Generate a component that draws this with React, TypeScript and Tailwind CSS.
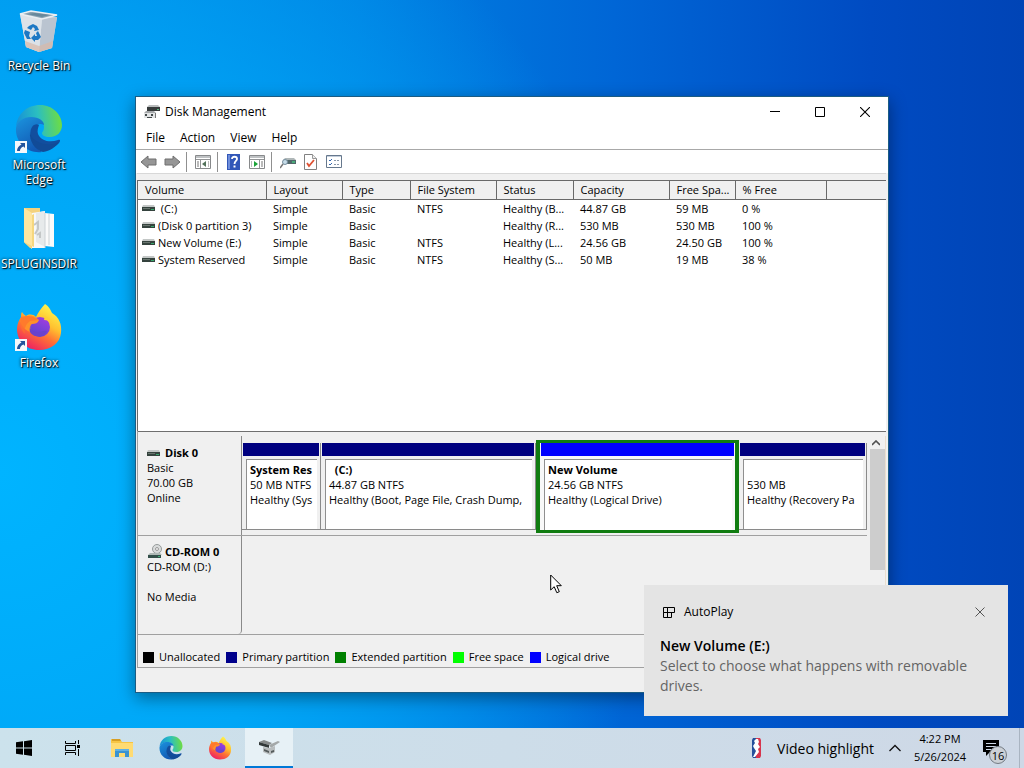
import { useState } from "react";
import type { ReactNode } from "react";

type Volume = {
  name: string;
  layout: string;
  type: string;
  fs: string;
  status: string;
  capacity: string;
  free: string;
  percent: string;
};

const volumes: Volume[] = [
  { name: " (C:)", layout: "Simple", type: "Basic", fs: "NTFS", status: "Healthy (B...", capacity: "44.87 GB", free: "59 MB", percent: "0 %" },
  { name: "(Disk 0 partition 3)", layout: "Simple", type: "Basic", fs: "", status: "Healthy (R...", capacity: "530 MB", free: "530 MB", percent: "100 %" },
  { name: "New Volume (E:)", layout: "Simple", type: "Basic", fs: "NTFS", status: "Healthy (L...", capacity: "24.56 GB", free: "24.50 GB", percent: "100 %" },
  { name: "System Reserved", layout: "Simple", type: "Basic", fs: "NTFS", status: "Healthy (S...", capacity: "50 MB", free: "19 MB", percent: "38 %" },
];

const columns = ["Volume", "Layout", "Type", "File System", "Status", "Capacity", "Free Spa...", "% Free", ""];

const legend = [
  { label: "Unallocated", color: "bg-black" },
  { label: "Primary partition", color: "bg-[#00008b]" },
  { label: "Extended partition", color: "bg-[#008000]" },
  { label: "Free space", color: "bg-[#00ff00]" },
  { label: "Logical drive", color: "bg-[#0000ff]" },
];

function RecycleBinIcon() {
  return (
    <svg width="48" height="48" viewBox="0 -2 48 48">
      <path d="M5 6 42 9 37 40 24 44 11 39Z" fill="#d5dbe2" />
      <path d="M27 11 42 9 37 40 24 44Z" fill="#bac4d0" />
      <path d="M5 6 27 11 24 44 11 39Z" fill="#dce2e8" />
      <path d="M5 6 16 3 42 7 27 11Z" fill="#8ba3b3" stroke="#e9eef2" strokeWidth="1.5" />
      <path d="M12 6 20 5 35 7 27 9Z" fill="#67889b" />
      <path d="M10 33 24 38 38 33 37 40 24 44 11 39Z" fill="#d8b9a8" opacity=".7" />
      <g fill="#1d78c4">
        <path d="m14 18 4-2 4 2 2 4-5 1 1-2-2-2-2 3-4-2Z" />
        <path d="m10 22 5 2-1 4 2 3h-4l-3-6Z" />
        <path d="m23 23 3 6-3 3h-3v2l-4-4 4-4v2h2l-1-3Z" />
      </g>
    </svg>
  );
}

function EdgeIcon({ size, id }: { size: number; id: string }) {
  return (
    <svg width={size} height={size} viewBox="0 0 48 48">
      <defs>
        <linearGradient id={`${id}-top`} x1="0" y1=".6" x2="1" y2=".5">
          <stop offset="0" stopColor="#168fd8" />
          <stop offset=".5" stopColor="#2bbfc0" />
          <stop offset="1" stopColor="#70dd3f" />
        </linearGradient>
        <linearGradient id={`${id}-mid`} x1="0" y1="0" x2=".5" y2="1">
          <stop offset="0" stopColor="#1b94de" />
          <stop offset="1" stopColor="#1259b4" />
        </linearGradient>
      </defs>
      <path d="M1 22C2 9 12 0 25 0c13 0 22 10 22 20 0 7-5 12-12 12-6 0-8-2-8-4 0-1 2-2 2-6 0-5-5-9-12-9-9 0-15 4-16 9Z" fill={`url(#${id}-top)`} />
      <path d="M1 23c1-7 8-11 15-11 8 0 13 4 13 8-3-2-8-1-11 3-4 5-2 18 9 24C13 49 0 38 1 23Z" fill={`url(#${id}-mid)`} />
      <path d="M19 20c-6 4-5 18 8 23 7 2 13-1 17-5 2-3 1-4-1-3-8 3-17 1-20-6-1-3 0-6 1-9-1-1-3-1-5 0Z" fill="#124e9e" />
      <path d="M15 27c-1 9 5 18 13 20 7-1 13-5 16-10-4 2-9 3-14 2-7-1-14-5-15-12Z" fill="#114b97" />
    </svg>
  );
}

function FirefoxIcon({ size, id }: { size: number; id: string }) {
  return (
    <svg width={size} height={size} viewBox="0 0 48 48">
      <defs>
        <linearGradient id={`${id}-fire`} x1=".8" y1=".1" x2=".3" y2="1">
          <stop offset="0" stopColor="#fff04a" />
          <stop offset=".35" stopColor="#ffc02f" />
          <stop offset=".6" stopColor="#ff7334" />
          <stop offset="1" stopColor="#ed1e65" />
        </linearGradient>
        <linearGradient id={`${id}-globe`} x1=".7" y1="0" x2=".2" y2="1">
          <stop offset="0" stopColor="#a23ce0" />
          <stop offset="1" stopColor="#5247d0" />
        </linearGradient>
      </defs>
      <path d="M30 1c4 2 6 7 7 9 7 4 10 11 9 20-1 10-10 17-22 17C11 47 2 38 2 26c0-5 2-9 4-12 0-2 0-4 1-5 1 2 3 3 4 4 3-2 7-2 10 1 2-4 5-9 9-13Z" fill={`url(#${id}-fire)`} />
      <circle cx="25" cy="24" r="10" fill={`url(#${id}-globe)`} />
      <path d="M5 18c3-5 9-7 14-5l5 4c-1 3-4 4-7 4-3 2-2 5 1 8-7 0-11-5-13-11Z" fill="#ff9229" />
      <path d="M15 24c1 4 4 5 8 5 4 0 5-2 9-1-2 5-9 7-14 4-3-2-4-4-3-8Z" fill="#6a42cc" />
      <path d="M27 12c5 1 9 4 11 9-3-3-6-4-9-4 1-2 0-3-2-5Z" fill="#ffcf35" />
      <path d="M6 14c-2 8 0 13 4 17-1-6 1-10 5-13l8-1c-4-4-11-5-17-3Z" fill="#ff702d" opacity=".7" />
    </svg>
  );
}

function FolderIcon() {
  return (
    <svg width="48" height="48" viewBox="0 0 48 48">
      <path d="M9 4h16v37L15 44 9 38Z" fill="#f4d27d" />
      <path d="m9 4 8 5v36l-8-7Z" fill="#ffe6a0" />
      <path d="m17 9 13-2v37H17Z" fill="#f7f8f9" />
      <path d="m21 9 9-2v36l-9-5Z" fill="#e7eaeb" />
      <path d="m30 9 9 1v33l-9-1Z" fill="#fafafa" />
      <path d="M30 9v35M34 10v31" stroke="#ccd2d5" />
      <path d="m19 21 4-3v7l-3 5m2 1 3-2v5" stroke="#c4c7c7" fill="none" strokeWidth="2" />
      <path d="m9 38 8 7V11l2-1v33Z" fill="#f6d77f" />
    </svg>
  );
}

function DriveIcon() {
  return (
    <svg className="shrink-0" width="14" height="14" viewBox="0 0 14 14">
      <path d="M1 4h11l1 2H0Z" fill="#c3c7c6" />
      <path d="M0 6h13v4H0Z" fill="#35433e" />
      <path d="M1 7h7v1H1Z" fill="#69756f" />
      <path d="M9 8h3v1H9Z" fill="#37a86c" />
    </svg>
  );
}

function DisksIcon({ size }: { size: number }) {
  return (
    <svg width={size} height={size} viewBox="0 0 16 16">
      <path d="M5 1h9l2 2H3Z" fill="#b9bcbd" />
      <path d="M3 3h13v4H3Z" fill="#363b3b" />
      <path d="M13 5h2v1h-2Z" fill="#54b57d" />
      <path d="M2 7h8l2 2H0Z" fill="#a5a8aa" />
      <path d="M0 9h12v5H0Z" fill="#e2e4e5" />
      <path d="M1 10h2v2H1Zm6 0h2v2H7Zm-4 3h5v1H3Z" fill="#414849" />
      <path d="M11.500 9v5" stroke="#777" />
    </svg>
  );
}

function CdRomIcon() {
  return (
    <svg className="shrink-0" width="16" height="16" viewBox="0 0 16 16">
      <circle cx="10" cy="5" r="4.500" fill="#dadcdc" stroke="#969b9b" />
      <circle cx="10" cy="5" r="1.500" fill="#f5f5f5" stroke="#999" />
      <path d="M3 9h10l2 2H1Z" fill="#afb9b6" />
      <path d="M1 11h13v3H1Z" fill="#34504a" />
      <path d="M11 12h2v1h-2Z" fill="#42b17a" />
    </svg>
  );
}

function ArrowIcon({ back = false }: { back?: boolean }) {
  return (
    <svg width="18" height="16" viewBox="0 0 18 16">
      <path
        d={back ? "m1 8 7-6v3h8v6H8v3Z" : "m17 8-7-6v3H2v6h8v3Z"}
        fill="#969696"
        stroke="#6f6f6f"
      />
    </svg>
  );
}

function PaneIcon({ play = false }: { play?: boolean }) {
  return (
    <svg width="16" height="14" viewBox="0 0 16 14">
      <path d="M.5.5h15v13H.5Z" fill="#fff" stroke="#87898b" />
      <path d="M1 1h14v2H1Z" fill="#bfc2c4" />
      <path d="M1 4.500h14" stroke="#929496" />
      <path d={play ? "M10.500 5v8" : "M5.500 5v8"} stroke="#929496" />
      <path
        d={play ? "M12 7h2M12 9h2M12 11h2M2 7h1M2 9h1M2 11h1" : "M2 7h2M2 9h2M2 11h2M13 7h1M13 9h1M13 11h1"}
        stroke="#777"
      />
      <path d={play ? "m5 6 4 3-4 3Z" : "m11 6-4 3 4 3Z"} fill={play ? "#1aa338" : "#52725a"} />
    </svg>
  );
}

function HelpIcon() {
  return (
    <svg width="13" height="16" viewBox="0 0 13 16">
      <path d="M0 0h13v16H0Z" fill="#3257b8" />
      <path d="M1 1h2v14H1Z" fill="#6f8edb" />
      <path d="M5 5c0-3 5-3 5 0 0 2-2.500 2-2.500 5" fill="none" stroke="#fff" strokeWidth="1.800" />
      <path d="M6.500 11.500h2v2h-2Z" fill="#fff" />
    </svg>
  );
}

function RescanIcon() {
  return (
    <svg width="16" height="14" viewBox="0 0 16 14">
      <path d="M5 3h9l2 2H3Z" fill="#afb7b8" />
      <path d="M3 5h13v4H3Z" fill="#52676a" />
      <path d="M12 6h3v2h-3Z" fill="#48aa79" />
      <circle cx="5" cy="7" r="2.500" fill="#c6dce8" stroke="#7890a0" />
      <path d="m3 9-3 4" stroke="#777" strokeWidth="1.500" />
    </svg>
  );
}

function CheckPageIcon() {
  return (
    <svg width="13" height="16" viewBox="0 0 13 16">
      <path d="M.5.5h8l4 4v11H.5Z" fill="#fff" stroke="#818181" />
      <path d="M8.500.5v4h4" fill="#eee" stroke="#999" />
      <path d="m3 9 2 3 5-6" fill="none" stroke="#df5132" strokeWidth="1.800" />
    </svg>
  );
}

function PropertiesIcon() {
  return (
    <svg width="16" height="13" viewBox="0 0 16 13">
      <path d="M.5.5h15v12H.5Z" fill="#fff" stroke="#66788d" />
      <path d="M1 1h14v1H1Z" fill="#c4cedb" />
      <path d="m3 5 1 1 2-2m-3 5 1 1 2-2" fill="none" stroke="#3769af" />
      <path d="M8 5.500h2m1 0h2M8 9.500h2m1 0h2" stroke="#8998aa" />
    </svg>
  );
}

function ExplorerIcon() {
  return (
    <svg width="22" height="20" viewBox="0 0 22 20">
      <path d="M0 1h9l2 3h11v15H0Z" fill="#f7c544" />
      <path d="M1 1h8l1 2H1Z" fill="#d69e25" />
      <path d="M0 5h22v14H0Z" fill="#ffdb72" />
      <path d="M4 19v-8h14v8h-4v-4H8v4Z" fill="#3a93d1" />
      <path d="M4 11h14v2H4Z" fill="#60b0e3" />
    </svg>
  );
}

function DesktopIcon({ label, shortcut, children }: { label: string; shortcut?: boolean; children: ReactNode }) {
  return (
    <button className="flex h-[99px] w-[78px] flex-col items-center">
      <span className="relative">
        {children}
        {shortcut && (
          <svg className="absolute bottom-0 left-0" width="12" height="12" viewBox="0 0 12 12">
            <path d="M0 0h12v12H0Z" fill="#f5f8fb" />
            <path d="M5 2h5v5L8.500 5.500C6 6.500 5 8 5 10H2c0-3 1.500-5 4.500-6.500Z" fill="#22539c" />
          </svg>
        )}
      </span>
      <span className="mt-1 text-center text-[12px] leading-[15px] text-white [text-shadow:1px_1px_1px_#000,0_0_3px_#000]">
        {label}
      </span>
    </button>
  );
}

function ToolButton({ label, children }: { label: string; children: ReactNode }) {
  return (
    <button aria-label={label} className="flex h-5 w-[23px] items-center justify-center hover:bg-[#d8eaf9]">
      {children}
    </button>
  );
}

function Separator() {
  return <span className="mr-1 ml-[3px] h-5 w-px bg-[#909090]" />;
}

function VolumeTable() {
  return (
    <table className="w-full table-fixed border-collapse text-left text-[11px]">
      <colgroup>
        <col className="w-[128px]" />
        <col className="w-[76px]" />
        <col className="w-[68px]" />
        <col className="w-[86px]" />
        <col className="w-[77px]" />
        <col className="w-[96px]" />
        <col className="w-[66px]" />
        <col className="w-[91px]" />
        <col />
      </colgroup>
      <thead>
        <tr className="h-[18px] bg-[#f0f0f0]">
          {columns.map((column, i) => (
            <th
              key={i}
              className="overflow-hidden border-r border-b border-[#696969] pl-[7px] leading-[17px] font-normal whitespace-nowrap last:border-r-0"
            >
              {column}
            </th>
          ))}
        </tr>
      </thead>
      <tbody>
        {volumes.map((v) => (
          <tr key={v.name} className="h-[17px] whitespace-nowrap *:overflow-hidden *:pl-[7px] *:leading-[17px]">
            <td>
              <span className="-ml-[3px] flex items-center gap-0.5 whitespace-pre">
                <DriveIcon />
                {v.name}
              </span>
            </td>
            <td>{v.layout}</td>
            <td>{v.type}</td>
            <td>{v.fs}</td>
            <td>{v.status}</td>
            <td>{v.capacity}</td>
            <td>{v.free}</td>
            <td>{v.percent}</td>
            <td />
          </tr>
        ))}
      </tbody>
    </table>
  );
}

function Partition({ name, size, status, logical }: { name: string; size: string; status: string; logical?: boolean }) {
  return (
    <div
      className={
        logical
          ? "flex min-w-0 flex-col border-x-4 border-y-3 border-[#107c10] bg-[#f8f8f8] px-px"
          : "my-[3px] flex min-w-0 flex-col border-r border-b border-[#8a8a8a] px-px"
      }
    >
      <div className={logical ? "h-[13px] bg-[#0000ff]" : "h-[13px] bg-[#00007f]"} />
      <div className="mr-0.5 ml-[3px] mt-[3px] flex-1 overflow-hidden border-t border-l border-[#8f8f8f] bg-white px-[3px] pt-0.5 leading-[15px] whitespace-pre">
        <div className="h-[15px] font-bold">{name}</div>
        <div>{size}</div>
        <div>{status}</div>
      </div>
    </div>
  );
}

function DiskMap() {
  return (
    <div className="flex border-t border-[#6f6f6f] bg-[#f0f0f0] pt-1 text-[11px]">
      <div className="min-w-0 flex-1">
        <div className="flex h-[100px] border-b border-[#a0a0a0]">
          <div className="w-[104px] shrink-0 border-r border-[#8a8a8a] px-[9px] pt-[9px] leading-[15px]">
            <div className="flex items-center gap-1 font-bold"><DriveIcon />Disk 0</div>
            <div>Basic</div>
            <div>70.00 GB</div>
            <div>Online</div>
          </div>
          <div className="grid min-w-0 flex-1 grid-cols-[79fr_215fr_203fr_128fr] pt-1 pb-0.5">
            <Partition name="System Res" size="50 MB NTFS" status="Healthy (Sys" />
            <Partition name="  (C:)" size="44.87 GB NTFS" status="Healthy (Boot, Page File, Crash Dump," />
            <Partition name="New Volume" size="24.56 GB NTFS" status="Healthy (Logical Drive)" logical />
            <Partition name="" size="530 MB" status="Healthy (Recovery Pa" />
          </div>
        </div>
        <div className="flex h-[99px] border-b border-[#a0a0a0]">
          <div className="w-[104px] shrink-0 rounded-br border-r border-[#8a8a8a] px-[9px] pt-2 leading-[15px]">
            <div className="flex h-[15px] items-center gap-0.5 font-bold whitespace-nowrap"><CdRomIcon />CD-ROM 0</div>
            <div>CD-ROM (D:)</div>
            <div className="mt-[15px]">No Media</div>
          </div>
          <div className="flex-1" />
        </div>
      </div>
      <div className="flex w-[19px] flex-col border-r border-[#eadfce] bg-[#f0f0f0]">
        <button aria-label="Scroll up" className="flex h-[13px] items-center justify-center">
          <svg width="8" height="6" viewBox="0 0 8 6"><path d="m0 5 4-4 4 4" fill="none" stroke="#505050" strokeWidth="1.600" /></svg>
        </button>
        <div className="ml-[3px] h-[121px] bg-[#cdcdcd]" />
      </div>
    </div>
  );
}

function DiskManagementWindow({ onClose }: { onClose: () => void }) {
  return (
    <section
      aria-label="Disk Management"
      className="absolute top-24 right-[135px] bottom-[35px] left-[135px] flex flex-col border border-[#1b5c83] bg-[#f0f0f0] text-[12px] text-black shadow-[0_5px_16px_rgba(0,0,0,0.4)]"
    >
      <header className="flex h-[30px] shrink-0 items-center bg-white pl-2">
        <DisksIcon size={16} />
        <h1 className="ml-[5px] flex-1">Disk Management</h1>
        <button aria-label="Minimize" className="flex h-full w-[45px] items-center justify-center hover:bg-[#e5e5e5]">
          <svg width="10" height="10" viewBox="0 0 10 10"><path d="M0 4.500h10" stroke="#000" /></svg>
        </button>
        <button aria-label="Maximize" className="flex h-full w-[45px] items-center justify-center hover:bg-[#e5e5e5]">
          <svg width="10" height="10" viewBox="0 0 10 10"><path d="M.5.5h9v9h-9Z" fill="none" stroke="#000" /></svg>
        </button>
        <button aria-label="Close" onClick={onClose} className="flex h-full w-[46px] items-center justify-center hover:bg-red-600">
          <svg width="10" height="10" viewBox="0 0 10 10"><path d="m0 0 10 10M10 0 0 10" stroke="#000" strokeWidth="1.100" /></svg>
        </button>
      </header>
      <nav className="flex h-[23px] shrink-0 items-center gap-[15px] border-b border-[#a8a8a8] bg-white px-[10px]">
        <button>File</button>
        <button>Action</button>
        <button>View</button>
        <button>Help</button>
      </nav>
      <div className="flex h-[23px] shrink-0 items-center bg-white pl-px">
        <ToolButton label="Back"><ArrowIcon back /></ToolButton>
        <ToolButton label="Forward"><ArrowIcon /></ToolButton>
        <Separator />
        <ToolButton label="Show or hide console tree"><PaneIcon /></ToolButton>
        <Separator />
        <ToolButton label="Help"><HelpIcon /></ToolButton>
        <ToolButton label="Show or hide action pane"><PaneIcon play /></ToolButton>
        <Separator />
        <ToolButton label="Rescan disks"><RescanIcon /></ToolButton>
        <ToolButton label="Check"><CheckPageIcon /></ToolButton>
        <ToolButton label="Properties"><PropertiesIcon /></ToolButton>
      </div>
      <div className="mr-0.5 ml-px flex min-h-0 flex-1 flex-col border-t border-[#d8d8d8] pt-1.5">
        <div className="min-h-0 flex-1 overflow-hidden border-t border-l border-[#696969] bg-white">
          <VolumeTable />
        </div>
        <div className="border-l border-[#a0a0a0]">
          <DiskMap />
          <div className="flex h-[33px] items-center gap-1.5 border-b border-[#a0a0a0] px-[5px] pt-3 text-[11px]">
            {legend.map((item) => (
              <span key={item.label} className="flex items-center gap-[5px] whitespace-nowrap">
                <span className={`size-[11px] ${item.color}`} />
                {item.label}
              </span>
            ))}
          </div>
        </div>
      </div>
      <footer className="h-6 shrink-0" />
    </section>
  );
}

function Toast({ onClose }: { onClose: () => void }) {
  return (
    <aside className="absolute right-4 bottom-3 h-[131px] w-[364px] bg-[#e4e4e4] px-4 pt-[17px] text-black">
      <div className="flex h-5 items-center text-[12px]">
        <svg className="mx-[3px]" width="12" height="12" viewBox="0 0 12 12">
          <path d="M.5 1.500h4v5h-4ZM4.500 1.500h7v5h-7ZM.5 6.500h8v5h-8ZM4.500 6.500v5" fill="none" stroke="#000" />
        </svg>
        <span className="ml-1.5 flex-1">AutoPlay</span>
        <button aria-label="Dismiss" onClick={onClose} className="mr-1.5 p-px">
          <svg width="10" height="10" viewBox="0 0 10 10"><path d="m.5.5 9 9m0-9-9 9" stroke="#555" /></svg>
        </button>
      </div>
      <h2 className="mt-3.5 text-[14px] leading-5 font-semibold">New Volume (E:)</h2>
      <p className="text-[14px] leading-5 text-[#646464]">Select to choose what happens with removable drives.</p>
    </aside>
  );
}

function TaskbarButton({ label, active, children }: { label: string; active?: boolean; children: ReactNode }) {
  return (
    <button
      aria-label={label}
      className={`flex h-10 w-12 items-center justify-center ${active ? "border-b-2 border-[#0078d7] bg-[#e7f1f6]" : "hover:bg-white/40"}`}
    >
      {children}
    </button>
  );
}

function Taskbar() {
  return (
    <footer className="flex h-10 shrink-0 items-center bg-linear-to-r from-[#cce2ec] to-[#ced8e6] text-black">
      <nav className="flex flex-1 gap-px">
        <TaskbarButton label="Start">
          <svg width="16" height="16" viewBox="0 0 16 16"><path d="m0 2.300 7-1v6.200H0Zm8-1.100L16 0v7.500H8ZM0 8.500h7v6.200l-7-1Zm8 0h8V16l-8-1.200Z" /></svg>
        </TaskbarButton>
        <TaskbarButton label="Task View">
          <svg width="16" height="16" viewBox="0 0 16 16" fill="none" stroke="#000">
            <path d="M.5 1v2.500h10V1M.5 5.500h10v5H.5ZM.5 15v-2.500h10V15M13.500 0v4M13.500 9v7" />
            <path d="M12 5h3v3h-3Z" fill="#000" stroke="none" />
          </svg>
        </TaskbarButton>
        <TaskbarButton label="File Explorer"><ExplorerIcon /></TaskbarButton>
        <TaskbarButton label="Microsoft Edge"><EdgeIcon size={24} id="task-edge" /></TaskbarButton>
        <TaskbarButton label="Firefox"><FirefoxIcon size={24} id="task-firefox" /></TaskbarButton>
        <TaskbarButton label="Disk Management" active>
          <svg width="22" height="18" viewBox="0 0 22 18">
            <path d="m1 4 5-2 8 3-3 2Z" fill="#858888" />
            <path d="m1 4 10 3v3L1 7Z" fill="#333939" />
            <path d="m11 7 9-4 2 1-9 6Z" fill="#a4a8a8" />
            <path d="m5 9 7 1 5-2v6l-5 3-7-3Z" fill="#b8bcbd" />
            <path d="m6 11 5 2v2l-5-2Zm7 2 3-1v2l-3 1Z" fill="#555c5c" />
          </svg>
        </TaskbarButton>
      </nav>
      <button className="flex h-full items-center gap-4 pr-[9px] text-[14px]">
        <svg width="9" height="20" viewBox="0 0 9 20">
          <path d="M1 0h4v20H1L0 18V2Z" fill="#26509b" />
          <path d="M4 0h4l1 2v16l-1 2H4Z" fill="#d7354d" />
          <path d="M4 1h2l1 3-1 2 2 3-2 2 1 3-4 5H1l3-6-2-3-1-2 2-3-1-2Z" fill="#fff" />
        </svg>
        Video highlight
      </button>
      <button aria-label="Show hidden icons" className="flex h-full w-6 items-center justify-center">
        <svg width="12" height="8" viewBox="0 0 12 8"><path d="m.5 7 5.500-5.500L11.500 7" fill="none" stroke="#111" strokeWidth="1.300" /></svg>
      </button>
      <button className="flex w-[66px] flex-col text-center text-[11px] leading-[18px]">
        <time>4:22 PM</time>
        <time>5/26/2024</time>
      </button>
      <button aria-label="16 new notifications" className="relative ml-2.5 h-full w-[37px] border-r border-[#a9b4c1]">
        <svg className="absolute top-3 left-0" width="16" height="16" viewBox="0 0 16 16">
          <path d="M0 0h16v12H7l-4 4v-4H0Z" />
          <path d="M3 3.500h10M3 6.500h10M3 9.500h6" stroke="#ced8e6" />
        </svg>
        <span className="absolute top-[18px] left-1.5 flex size-[18px] items-center justify-center rounded-full border border-[#747b83] bg-[#cbd0d6] text-[11px] leading-none">
          16
        </span>
      </button>
      <span className="w-1" />
    </footer>
  );
}

export default function App() {
  const [windowOpen, setWindowOpen] = useState(true);
  const [toastOpen, setToastOpen] = useState(true);

  return (
    <div className="flex min-h-screen flex-col bg-[#0078d7] font-['Open_Sans','Noto_Sans',sans-serif]">
      <main className="relative flex-1 overflow-hidden bg-[radial-gradient(ellipse_65%_95%_at_0%_65%,#00b4ff_0%,#00a6f6_50%,transparent_100%),linear-gradient(to_right,#0092ea_0%,#0080e2_35%,#0066d6_60%,#004bc2_85%,#0044b6_100%)]">
        <div className="flex flex-col items-start pt-1.5">
          <DesktopIcon label="Recycle Bin"><RecycleBinIcon /></DesktopIcon>
          <DesktopIcon label="Microsoft Edge" shortcut><EdgeIcon size={48} id="desk-edge" /></DesktopIcon>
          <DesktopIcon label="SPLUGINSDIR"><FolderIcon /></DesktopIcon>
          <DesktopIcon label="Firefox" shortcut><FirefoxIcon size={48} id="desk-firefox" /></DesktopIcon>
        </div>
        {windowOpen && <DiskManagementWindow onClose={() => setWindowOpen(false)} />}
        <svg className="pointer-events-none absolute top-[574px] left-[550px]" width="12" height="20" viewBox="0 0 12 20">
          <path d="M.7 1v15l3.500-3.300 2.600 6 2.500-1-2.600-6h4.600Z" fill="#fff" stroke="#000" />
        </svg>
        {toastOpen && <Toast onClose={() => setToastOpen(false)} />}
      </main>
      <Taskbar />
    </div>
  );
}
